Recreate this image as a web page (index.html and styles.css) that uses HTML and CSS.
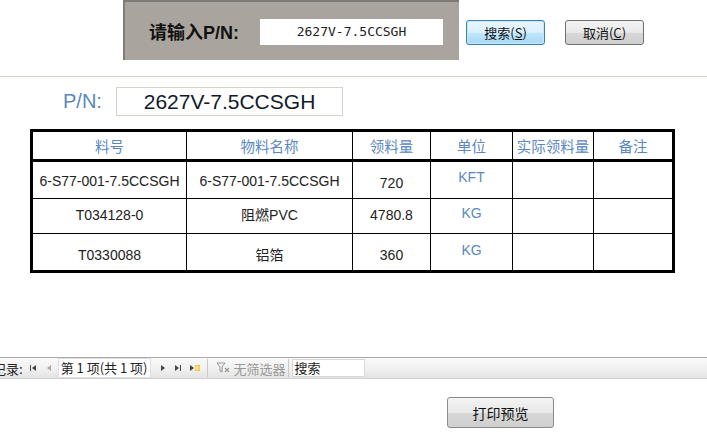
FILE: index.html
```html
<!DOCTYPE html>
<html>
  <head>
    <meta charset="UTF-8">
    <link rel="stylesheet" href="styles.css">
  </head>
  <body>
    <div class="top">
      <div class="search-panel">
        <span class="search-label">请输入P/N:</span>
        <span class="search-input">2627V-7.5CCSGH</span>
      </div>
      <span class="btn btn-search">搜索(<u>S</u>)</span>
      <span class="btn btn-cancel">取消(<u>C</u>)</span>
    </div>
    <div class="divider"></div>

    <div class="pn-row">
      <span class="pn-label">P/N:</span>
      <span class="pn-value">2627V-7.5CCSGH</span>
    </div>

    <table class="items">
      <colgroup>
        <col class="c1"><col class="c2"><col class="c3"><col class="c4"><col class="c5"><col class="c6">
      </colgroup>
      <tr class="head">
        <th>料号</th>
        <th>物料名称</th>
        <th>领料量</th>
        <th>单位</th>
        <th>实际领料量</th>
        <th>备注</th>
      </tr>
      <tr class="r1">
        <td>6-S77-001-7.5CCSGH</td>
        <td>6-S77-001-7.5CCSGH</td>
        <td class="low">720</td>
        <td class="unit">KFT</td>
        <td></td>
        <td></td>
      </tr>
      <tr class="r2">
        <td>T034128-0</td>
        <td>阻燃PVC</td>
        <td>4780.8</td>
        <td class="unit">KG</td>
        <td></td>
        <td></td>
      </tr>
      <tr class="r3">
        <td>T0330088</td>
        <td>铝箔</td>
        <td>360</td>
        <td class="unit">KG</td>
        <td></td>
        <td></td>
      </tr>
    </table>

    <div class="toolbar">
      <span class="tb-label">记录:</span>
      <span class="nav">
        <svg width="8" height="8" viewBox="0 0 8 8"><rect x="1" y="1" width="1" height="6" fill="#444"/><path d="M7 1 L3 4 L7 7 Z" fill="#444"/></svg>
        <svg width="8" height="8" viewBox="0 0 8 8"><path d="M6 1 L2 4 L6 7 Z" fill="#aaa"/></svg>
      </span>
      <span class="tb-page">第 1 项(共 1 项)</span>
      <span class="nav nav-right">
        <svg width="8" height="8" viewBox="0 0 8 8"><path d="M2 1 L6 4 L2 7 Z" fill="#444"/></svg>
        <svg width="8" height="8" viewBox="0 0 8 8"><path d="M1 1 L5 4 L1 7 Z" fill="#444"/><rect x="6" y="1" width="1" height="6" fill="#444"/></svg>
        <svg width="12" height="8" viewBox="0 0 12 8"><path d="M1 1 L5 4 L1 7 Z" fill="#444"/><rect x="6" y="1" width="5" height="6" fill="#f0c020"/><path d="M6 3 H11 M6 5 H11 M8 1 V7" stroke="#fff" stroke-width="0.6"/></svg>
      </span>
      <span class="tb-sep"></span>
      <span class="tb-filter">
        <svg width="14" height="12" viewBox="0 0 14 12"><path d="M1 1 H9 L6 5 V10 L4 9 V5 Z" fill="none" stroke="#999"/><path d="M9 6 L13 10 M13 6 L9 10" stroke="#999" stroke-width="1.2"/></svg>
        无筛选器
      </span>
      <span class="tb-sep tb-sep-last"></span>
      <span class="tb-search">搜索</span>
    </div>

    <div class="footer">
      <span class="btn btn-print">打印预览</span>
    </div>
  </body>
</html>
```

FILE: styles.css
```css
body {
  margin: 0;
  width: 707px;
  height: 436px;
  overflow: hidden;
  background: white;
  font-family: "Liberation Sans", "Noto Sans CJK SC", sans-serif;
  color: #1a1a1a;
}
.top {
  display: flex;
  align-items: flex-start;
  padding-left: 123px;
  height: 62px;
}
.search-panel {
  display: flex;
  align-items: center;
  width: 336px;
  height: 60px;
  box-sizing: border-box;
  background: #a9a59e;
  border-top: 2px solid #7f7b76;
  border-left: 2px solid #7f7b76;
  padding-left: 24px;
}
.search-label {
  font-size: 18px;
  font-weight: bold;
  color: #111;
  width: 111px;
}
.search-input {
  width: 183px;
  height: 26px;
  line-height: 26px;
  background: white;
  text-align: center;
  font-family: "DejaVu Sans Mono", "Liberation Mono", monospace;
  font-size: 13px;
  color: #222;
  margin-top: 2px;
}
.btn {
  display: inline-flex;
  align-items: center;
  justify-content: center;
  box-sizing: border-box;
  font-family: "Noto Sans CJK SC", sans-serif;
  font-size: 13px;
  color: #111;
  border: 1px solid #707070;
  border-radius: 3px;
  background: linear-gradient(#f4f4f4 0%, #e8e8e8 50%, #d8d8d8 51%, #cfcfcf 100%);
}
.btn u {
  text-decoration-thickness: 1px;
}
.btn-search {
  width: 79px;
  height: 25px;
  margin: 20px 0 0 7px;
  border-color: #3c7fb1;
  background: linear-gradient(#eaf6fd 0%, #d9f0fc 50%, #bee6fd 51%, #a7d9f5 100%);
  box-shadow: inset 0 0 0 1px #c8e6f8;
}
.btn-cancel {
  width: 79px;
  height: 25px;
  margin: 20px 0 0 20px;
}
.divider {
  height: 1px;
  margin-top: 14px;
  background: #d9d5cb;
}
.pn-row {
  display: flex;
  align-items: center;
  padding-left: 63px;
  margin-top: 10px;
  height: 29px;
}
.pn-label {
  width: 53px;
  font-size: 20px;
  color: #5a88c2;
}
.pn-value {
  width: 227px;
  height: 29px;
  line-height: 27px;
  box-sizing: border-box;
  border: 1px solid #d6d3c6;
  text-align: center;
  font-size: 21px;
  color: #0f1a2a;
}
.items {
  margin: 13px 0 0 30px;
  width: 642px;
  table-layout: fixed;
  border-collapse: collapse;
  border: 3px solid #000;
  font-size: 14px;
}
.items th,
.items td {
  border: 1px solid #000;
  padding: 0;
  text-align: center;
  vertical-align: top;
  white-space: nowrap;
  overflow: visible;
  line-height: 16px;
}
.items th {
  font-weight: normal;
  color: #5a88c2;
  font-family: "Noto Sans CJK SC", sans-serif;
  font-size: 14.5px;
  border-bottom: 3px solid #000;
  padding-top: 6px;
}
.c1 { width: 155px; }
.c2 { width: 166px; }
.c3 { width: 78px; }
.c4 { width: 82px; }
.c5 { width: 81px; }
.c6 { width: 80px; }
.items tr.head { height: 30px; }
.items tr.r1 { height: 38px; }
.items tr.r2 { height: 35px; }
.items tr.r3 { height: 38px; }
.items td {
  color: #222;
}
.items tr.r1 td { padding-top: 11px; }
.items tr.r1 td.low { padding-top: 13px; }
.items tr.r1 td.unit { padding-top: 7px; }
.items tr.r2 td { padding-top: 8px; }
.items tr.r2 td.unit { padding-top: 6px; }
.items tr.r3 td { padding-top: 13px; }
.items tr.r3 td.unit { padding-top: 8px; }
.items td.unit {
  color: #5a88c2;
}
.toolbar {
  display: flex;
  align-items: center;
  margin-top: 84px;
  height: 20px;
  border-top: 1px solid #a9a9a9;
  border-bottom: 1px solid #d0d0d0;
  background: linear-gradient(#fafafa 0%, #f0f0f0 55%, #e3e3e3 100%);
  font-family: "Noto Sans CJK SC", sans-serif;
  font-size: 13px;
  color: #222;
  margin-left: -7px;
}
.tb-label {
  padding-right: 6px;
}
.nav {
  display: inline-flex;
  align-items: center;
  gap: 8px;
  padding: 0 2px 0 0;
}
.nav-right {
  padding: 0 0 0 8px;
  gap: 7px;
}
.tb-page {
  background: white;
  height: 18px;
  line-height: 18px;
  padding: 0 2px;
  margin-left: 3px;
  border: 1px solid #e0e0e0;
}
.tb-sep {
  width: 1px;
  height: 18px;
  background: #c8c8c8;
  margin: 0 4px 0 6px;
}
.tb-sep-last {
  margin: 0 3px 0 2px;
}
.tb-filter {
  display: inline-flex;
  align-items: center;
  gap: 4px;
  color: #999;
  padding: 0 0 0 4px;
}
.tb-search {
  width: 69px;
  height: 16px;
  line-height: 16px;
  background: white;
  border: 1px solid #d8d8d8;
  padding-left: 2px;
}
.footer {
  display: flex;
  padding-left: 447px;
  margin-top: 18px;
}
.btn-print {
  width: 107px;
  height: 31px;
  font-size: 14px;
  border-color: #8a8a8a;
}
```
